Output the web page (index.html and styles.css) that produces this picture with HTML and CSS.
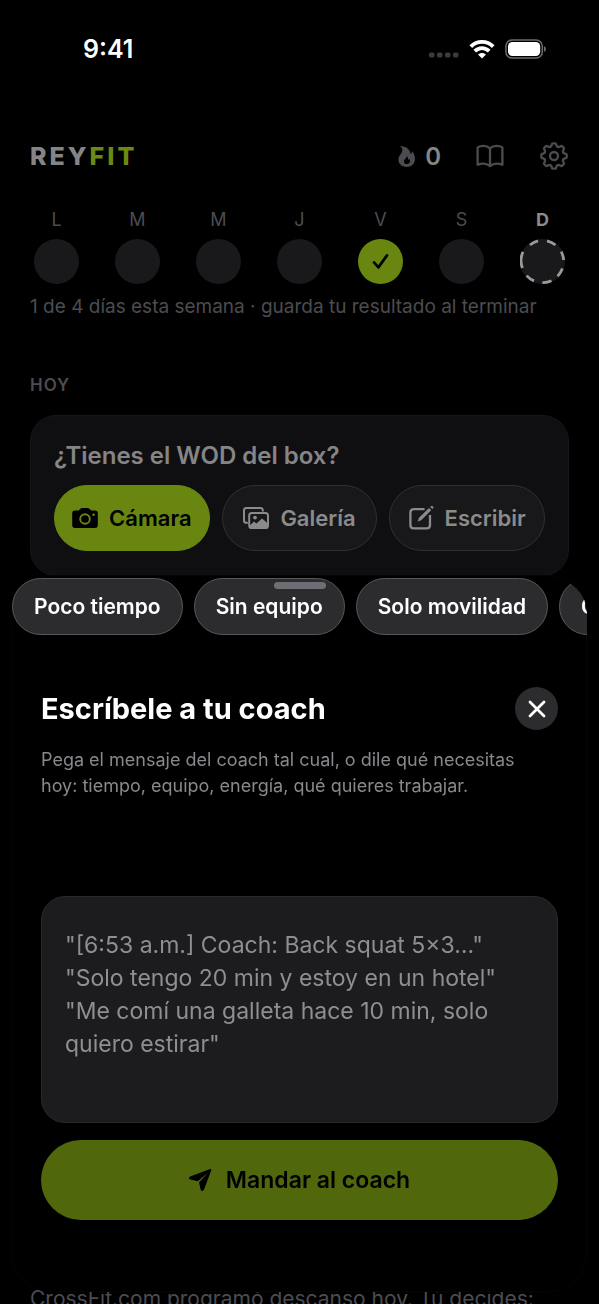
FILE: index.html
```
<!DOCTYPE html>
<html lang="es">
<head>
<meta charset="utf-8">
<meta name="viewport" content="width=device-width, initial-scale=1">
<title>ReyFit</title>
<link rel="stylesheet" href="styles.css">
</head>
<body>
<div class="app">
  <div class="status">
    <span class="clock">9:41</span>
    <div class="status-icons">
      <svg width="30" height="6" viewBox="0 0 30 6" fill="#3b3b3b"><rect x="0" y="0.5" width="5.5" height="5" rx="1.8"/><rect x="8" y="0.5" width="5.5" height="5" rx="1.8"/><rect x="16" y="0.5" width="5.5" height="5" rx="1.8"/><rect x="24" y="0.5" width="5.5" height="5" rx="1.8"/></svg>
      <svg class="wifi" width="26" height="20" viewBox="0 0 26 20" fill="none" stroke="#fff" stroke-width="3.8"><path d="M1.8 7.6C8 1.4 18 1.4 24.2 7.6"/><path d="M5.8 12.2C10 8 16 8 20.2 12.2"/><path d="M9 15.6C11.2 13.3 14.8 13.3 17 15.6L13 19.6Z" fill="#fff" stroke="none"/></svg>
      <svg class="battery" width="42" height="20" viewBox="0 0 42 20"><rect x="0.9" y="0.9" width="36.4" height="18.2" rx="6.2" fill="none" stroke="#6c6c6c" stroke-width="1.5"/><rect x="3" y="3" width="32.2" height="14" rx="4.4" fill="#fff"/><path d="M39 7.2C41.6 8 41.6 12 39 12.8Z" fill="#6c6c6c"/></svg>
    </div>
  </div>

  <header class="topbar">
    <h1 class="logo">REY<span>FIT</span></h1>
    <div class="streak">
      <svg width="17" height="21" viewBox="0 0 17 21" fill="#4c4c50" fill-rule="evenodd"><path d="M1.8 0C8 0 12.2 3.6 12.6 8C13.7 7.5 14 6.4 14 5C16 7.4 17 10.2 17 13C17 17.8 13.2 21 8.5 21C3.8 21 .4 17.8 .4 13.6C.4 9.4 4.4 7.4 4.4 4C4.4 2.4 3.2 .9 1.8 0ZM8.8 10C9.2 12 6 13 6 15.4C6 17 7.2 18 8.8 18C10.6 18 12 16.8 12 15C12 14.1 11.8 13.4 11.3 12.8C10.9 13.6 10.4 13.9 9.8 13.8C10.4 12.4 9.8 10.8 8.8 10Z"/></svg>
      <span>0</span>
    </div>
    <button class="icon-btn" type="button" aria-label="Biblioteca">
      <svg width="28" height="24" viewBox="0 0 28 24" fill="none" stroke="#4c4c50" stroke-width="2.3" stroke-linejoin="round"><path d="M14 4.4C12 2.4 10 1.8 7.4 1.8C5 1.8 3.3 2.3 1.6 3.4V20.8C3.4 19.9 5 19.6 7.4 19.6C10 19.6 12 20.4 14 22C16 20.4 18 19.6 20.6 19.6C23 19.6 24.6 19.9 26.4 20.8V3.4C24.7 2.3 23 1.8 20.6 1.8C18 1.8 16 2.4 14 4.4ZM14 4.4V22"/></svg>
    </button>
    <button class="icon-btn" type="button" aria-label="Ajustes">
      <svg width="30" height="30" viewBox="-15 -15 30 30" fill="none" stroke="#4c4c50" stroke-width="2.3" stroke-linecap="round"><defs><path id="tooth" d="M-3.8-9.1C-3-9.6-2.6-10-2.4-10.6L-2.1-12Q-1.9-12.7-1-12.7H1Q1.9-12.7 2.1-12L2.4-10.6C2.6-10 3-9.6 3.8-9.1"/></defs><use href="#tooth"/><use href="#tooth" transform="rotate(45)"/><use href="#tooth" transform="rotate(90)"/><use href="#tooth" transform="rotate(135)"/><use href="#tooth" transform="rotate(180)"/><use href="#tooth" transform="rotate(225)"/><use href="#tooth" transform="rotate(270)"/><use href="#tooth" transform="rotate(315)"/><circle r="4"/></svg>
    </button>
  </header>

  <div class="week">
    <div class="day"><span>L</span><i class="dot"></i></div>
    <div class="day"><span>M</span><i class="dot"></i></div>
    <div class="day"><span>M</span><i class="dot"></i></div>
    <div class="day"><span>J</span><i class="dot"></i></div>
    <div class="day"><span>V</span><i class="dot done"><svg width="17" height="17" viewBox="0 0 17 17" fill="none" stroke="#000" stroke-width="2.7" stroke-linecap="round" stroke-linejoin="round"><path d="M2 9.4L6.4 14.4L15 2.4"/></svg></i></div>
    <div class="day"><span>S</span><i class="dot"></i></div>
    <div class="day today"><span>D</span><i class="dot"><svg width="45" height="45" viewBox="0 0 45 45" fill="none" stroke="#9a9a9a" stroke-width="2.8"><path d="M18 1.9A21.1 21.1 0 0 0 10 6M27 1.9A21.1 21.1 0 0 1 35.5 6M41.2 12.6A21.1 21.1 0 0 1 43.6 21M42.4 29.6A21.1 21.1 0 0 1 37.6 37.2M31.5 41.8A21.1 21.1 0 0 1 22.4 43.6M14 41.9A21.1 21.1 0 0 1 6.6 36.6M2.4 29A21.1 21.1 0 0 1 3 12.8"/></svg></i></div>
  </div>
  <p class="summary">1 de 4 días esta semana · guarda tu resultado al terminar</p>

  <h2 class="section">HOY</h2>
  <section class="card">
    <h3>¿Tienes el WOD del box?</h3>
    <div class="actions">
      <button class="action primary" type="button">
        <svg width="26" height="20" viewBox="0 0 26 20"><path fill="#000" d="M3 2.6H6.6L8.2 1Q9 0 10.2 0H15.6Q16.8 0 17.6 1L19.2 2.6H23Q25.8 2.6 25.8 5.4V17Q25.8 20 23 20H3Q.2 20 .2 17V5.4Q.2 2.6 3 2.6Z"/><circle cx="13" cy="11" r="4.8" fill="none" stroke="#698710" stroke-width="1.9"/><circle cx="21.6" cy="6.8" r="1.3" fill="#698710"/></svg>
        Cámara
      </button>
      <button class="action" type="button">
        <svg width="26" height="22" viewBox="0 0 26 22" fill="none" stroke="#8b8b8c" stroke-width="2"><path d="M19.8 4.4V3.4Q19.8 1 17.4 1H3.4Q1 1 1 3.4V13.4Q1 15.8 3.4 15.8H4.8"/><rect x="6.2" y="6" width="18.8" height="15" rx="2.6"/><path d="M6.8 18.4L11 14.4L13.4 16.6L19 11.4L24.6 16.2V19.4Q24.6 20.8 23 20.8H8.4Q6.8 20.8 6.8 19Z" fill="#8b8b8c" stroke="none"/><circle cx="12" cy="10.6" r="1.9" fill="#8b8b8c" stroke="none"/></svg>
        Galería
      </button>
      <button class="action" type="button">
        <svg width="25" height="24" viewBox="0 0 25 24" fill="none" stroke="#8b8b8c" stroke-width="2.3"><path d="M15.6 3.2H4.8Q1.4 3.2 1.4 6.6V19Q1.4 22.4 4.8 22.4H17.6Q21 22.4 21 19V9"/><path d="M8.6 15.6L10 11.8L20 2L22.2 4.2L12.2 14.2Z" fill="#8b8b8c" stroke="none"/><path d="M21.2.9L22.2 0Q23 -.4 24 .4Q24.8 1.3 24.3 2.1L23.3 3Z" fill="#8b8b8c" stroke="none"/></svg>
        Escribir
      </button>
    </div>
  </section>
  <p class="rest">CrossFit.com programó descanso hoy. Tú decides:</p>
</div>

<form class="sheet">
  <div class="chips">
    <button class="chip" type="button">Poco tiempo</button>
    <button class="chip" type="button">Sin equipo</button>
    <button class="chip" type="button">Solo movilidad</button>
    <button class="chip" type="button">Cansado</button>
  </div>
  <div class="grabber"></div>
  <div class="sheet-head">
    <h2><label for="message">Escríbele a tu coach</label></h2>
    <button class="close" type="button" aria-label="Cerrar"><svg width="18" height="18" viewBox="0 0 18 18" fill="none" stroke="#fff" stroke-width="2.8" stroke-linecap="round"><path d="M2 2L16 16M16 2L2 16"/></svg></button>
  </div>
  <p class="hint">Pega el mensaje del coach tal cual, o dile qué necesitas hoy: tiempo, equipo, energía, qué quieres trabajar.</p>
  <textarea id="message" class="message" placeholder="&quot;[6:53 a.m.] Coach: Back squat 5×3…&quot;&#10;&quot;Solo tengo 20 min y estoy en un hotel&quot;&#10;&quot;Me comí una galleta hace 10 min, solo quiero estirar&quot;"></textarea>
  <button class="send" type="button">
    <svg width="23" height="22" viewBox="0 0 23 22" fill="#000"><path d="M21.2.1Q22.6-.2 22.3 1.2L15 20.6Q14.5 21.9 13.2 21.9Q11.9 21.9 11.6 20.6L10 13.6L19.4 3.2L8.8 12.2L1.4 10.6Q0 10.2 0 9Q0 7.9 1.2 7.4Z"/></svg>
    Mandar al coach
  </button>
</form>
</body>
</html>
```

FILE: styles.css
```
* { box-sizing: border-box; margin: 0; padding: 0; }

body {
  background: #000;
  color: #858586;
  font-family: Inter, "Liberation Sans", sans-serif;
  overflow: hidden;
}

button { font: inherit; border: 0; background: none; }
svg { display: block; flex: none; }

.app {
  display: flex;
  flex-direction: column;
  height: 100vh;
  padding: 32px 30px 0;
}

.status {
  display: flex;
  align-items: center;
  justify-content: space-between;
  height: 34px;
  padding: 0 22px 0 53px;
}
.clock { color: #fff; font-size: 25px; font-weight: 600; }
.status-icons { display: flex; align-items: center; gap: 10px; }
.status-icons svg:first-child { margin-top: 12px; }

.topbar {
  display: flex;
  align-items: center;
  height: 32px;
  margin-top: 74px;
}
.logo { font-size: 25px; font-weight: 800; letter-spacing: 3px; margin-right: auto; }
.logo span { color: #6b8913; }
.streak { display: flex; align-items: center; gap: 10px; font-size: 24px; font-weight: 600; }
.icon-btn { margin-left: 35px; }

.week {
  display: grid;
  grid-template-columns: repeat(7, 1fr);
  gap: 28px;
  margin-top: 37px;
}
.day {
  display: flex;
  flex-direction: column;
  align-items: center;
  gap: 8px;
  color: #4c4c50;
  font-size: 18px;
  line-height: 22px;
}
.today { color: #8b8b8c; font-weight: 700; }
.dot {
  display: grid;
  place-items: center;
  width: 45px;
  height: 45px;
  border-radius: 50%;
  background: #19191b;
}
.done { background: #698710; }
.summary { margin-top: 10px; color: #4c4c50; font-size: 19px; line-height: 26px; white-space: nowrap; }

.section {
  margin-top: 54px;
  color: #4c4c50;
  font-size: 17px;
  font-weight: 600;
  line-height: 22px;
  letter-spacing: 1px;
}

.card {
  margin-top: 19px;
  padding: 24px 23px;
  border: 1px solid #161618;
  border-radius: 26px;
  background: #0f0f11;
}
.card h3 { font-size: 24px; font-weight: 600; line-height: 32px; }
.actions { display: grid; grid-template-columns: repeat(3, 1fr); gap: 12px; margin-top: 13px; }
.action {
  display: flex;
  align-items: center;
  justify-content: center;
  gap: 11px;
  height: 66px;
  border: 1px solid #303033;
  border-radius: 33px;
  background: #18181a;
  color: #8b8b8c;
  font-size: 22px;
  font-weight: 600;
}
.primary { border-color: #698710; background: #698710; color: #000; }

.rest { margin: auto 0 -9px; color: #4c4c50; font-size: 21px; line-height: 28px; white-space: nowrap; }

.sheet {
  position: fixed;
  right: 12px;
  bottom: 12px;
  left: 12px;
  padding: 3px 0 72px;
  border-radius: 38px;
  background: #000;
  box-shadow: inset 0 0 0 1px #050505;
}
.chips {
  display: flex;
  gap: 11px;
  overflow: hidden;
  border-top-right-radius: 36px;
}
.chip {
  flex: none;
  height: 57px;
  padding: 0 21px;
  border: 1px solid #58585b;
  border-radius: 29px;
  background: #2c2c2e;
  color: #fff;
  font-size: 21px;
  font-weight: 600;
}
.grabber {
  position: absolute;
  top: 7px;
  left: calc(50% - 26px);
  width: 52px;
  height: 7px;
  border-radius: 4px;
  background: #6d6d73;
}
.sheet-head {
  display: flex;
  align-items: center;
  justify-content: space-between;
  margin: 52px 29px 0;
}
.sheet-head h2 { color: #fff; font-size: 29px; font-weight: 700; line-height: 40px; }
.close {
  display: grid;
  place-items: center;
  width: 43px;
  height: 43px;
  border-radius: 50%;
  background: #2c2c2e;
}
.hint { margin: 17px 48px 0 29px; color: #88888d; font-size: 18px; line-height: 26px; }
.message {
  display: block;
  width: calc(100% - 58px);
  height: 227px;
  margin: 97px 29px 0;
  padding: 32px 23px;
  border: 1px solid #29292b;
  border-radius: 24px;
  background: #1c1c1e;
  color: #fff;
  font: 23px/33px Inter, "Liberation Sans", sans-serif;
  resize: none;
  outline: 0;
}
.message::placeholder { color: #8e8e93; opacity: 1; }
.send {
  display: flex;
  align-items: center;
  justify-content: center;
  gap: 14px;
  width: calc(100% - 58px);
  height: 80px;
  margin: 17px 29px 0;
  border-radius: 40px;
  background: #50680b;
  color: #000;
  font-size: 23px;
  font-weight: 600;
}
```
